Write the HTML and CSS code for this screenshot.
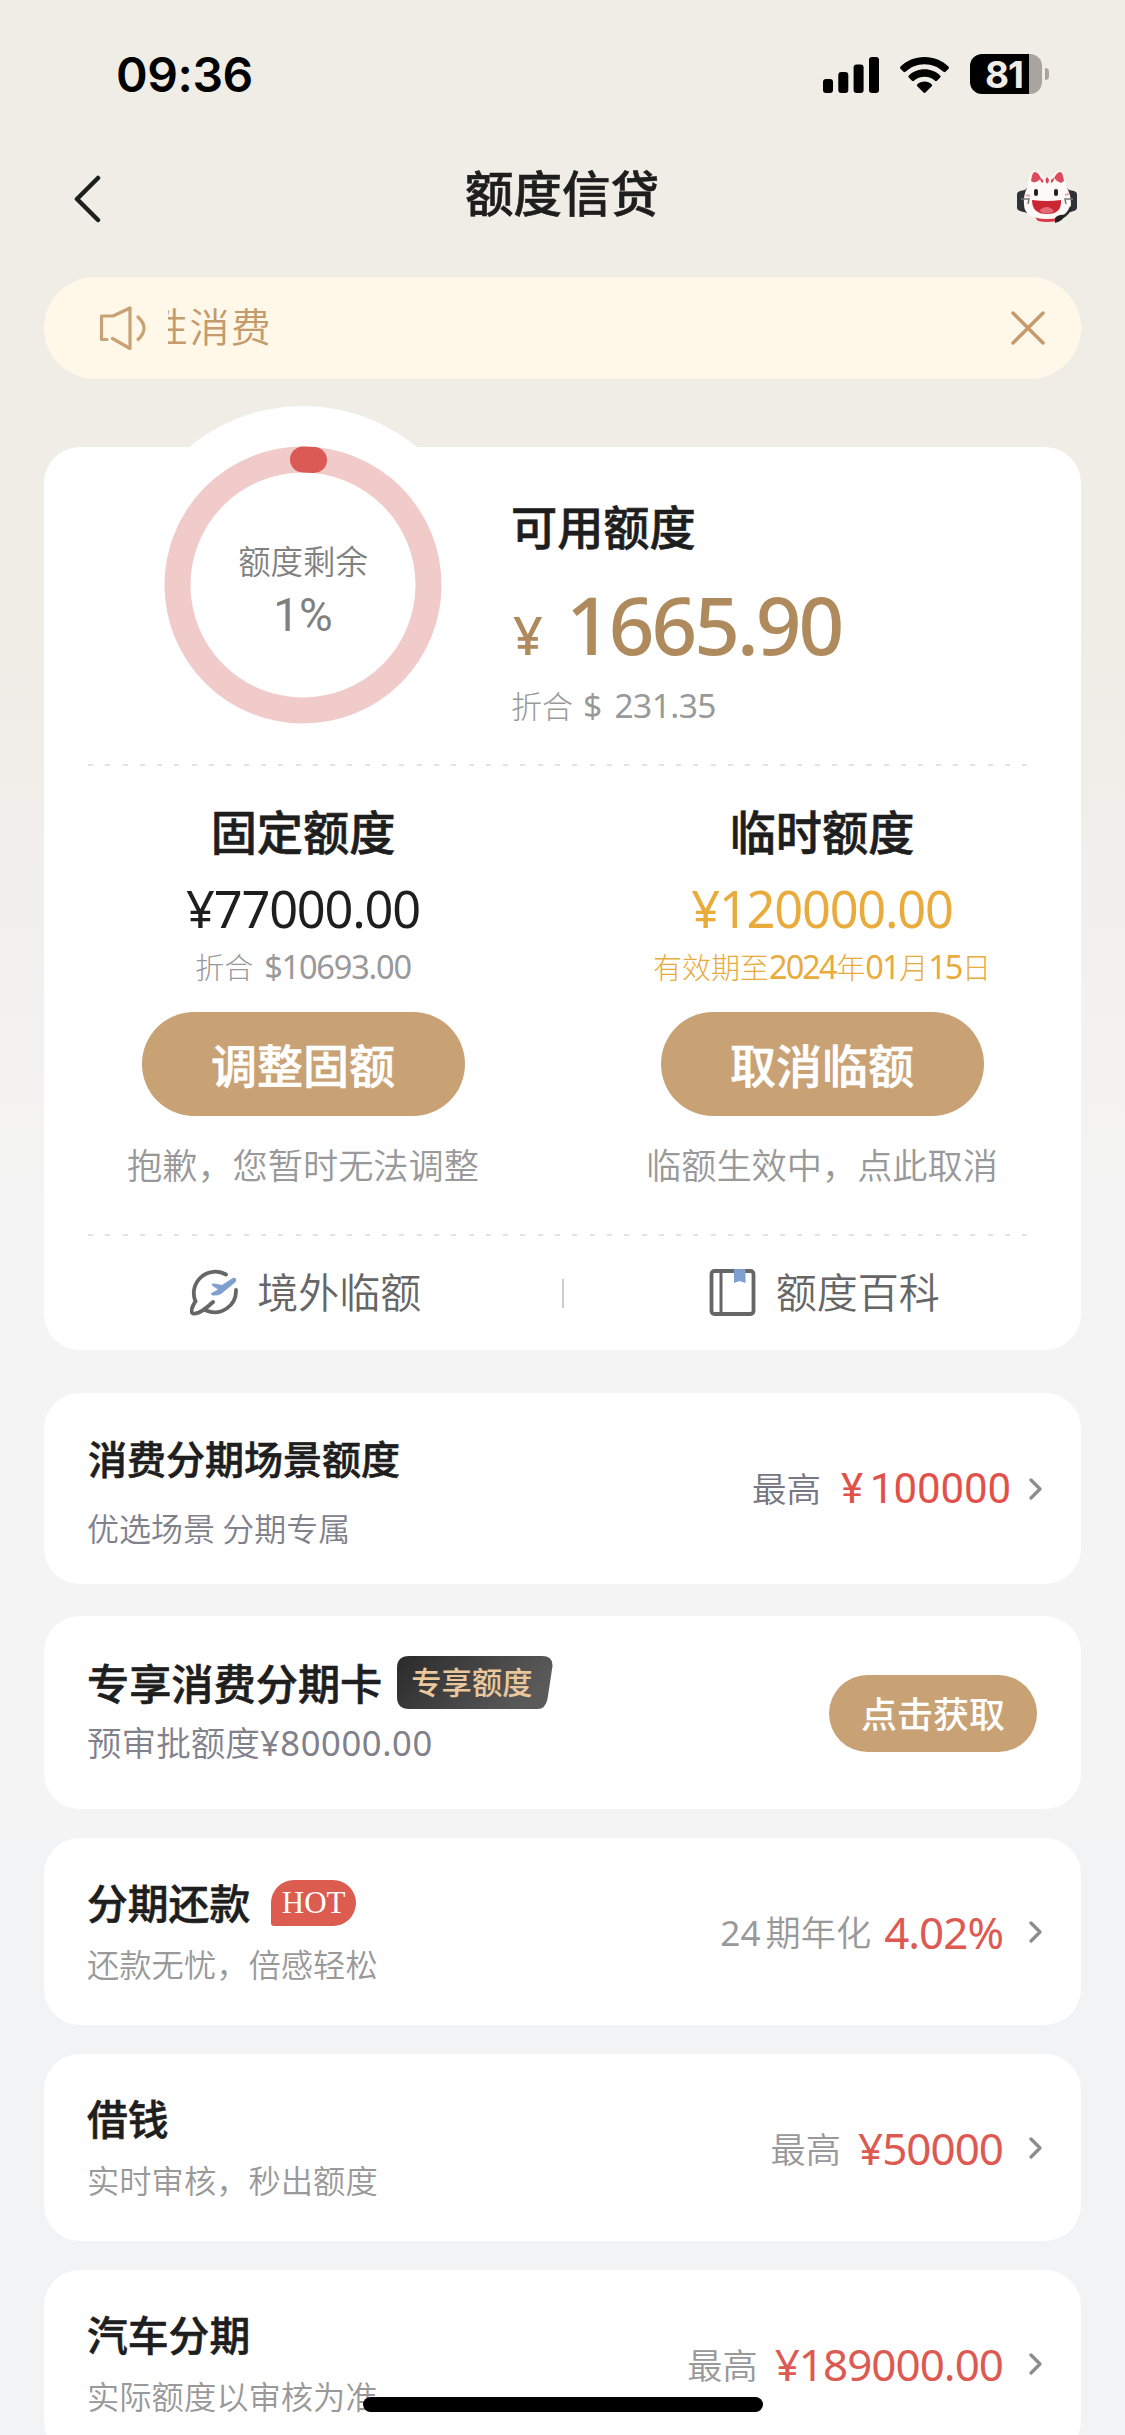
FILE: index.html
```html
<!DOCTYPE html>
<html lang="zh-CN">
<head>
<meta charset="utf-8">
<title>额度信贷</title>
<link rel="stylesheet" href="styles.css">
</head>
<body>
<div class="screen">
  <div class="status">
    <span class="clock">09:36</span>
    <svg class="signal" viewBox="0 0 56 36"><rect x="0" y="22" width="10" height="14" rx="3"/><rect x="15.3" y="15" width="10" height="21" rx="3"/><rect x="30.6" y="7.500" width="10" height="28.500" rx="3"/><rect x="46" y="0" width="10" height="36" rx="3"/></svg>
    <svg class="wifi" viewBox="0 0 49 36"><path d="M24.500 0C34 0 42.500 3.600 48.400 9.600c.7.700.7 1.500.1 2.100l-3 3.100c-.6.600-1.400.6-2 0C38.500 10 31.900 7.200 24.500 7.200S10.500 10 5.500 14.800c-.6.600-1.400.6-2 0l-3-3.100c-.6-.6-.6-1.400.1-2.100C6.500 3.600 15 0 24.500 0z"/><path d="M24.500 12.300c6.200 0 11.600 2.300 15.600 6.100.7.600.7 1.400.1 2.100l-3.200 3.200c-.6.600-1.400.6-2 .1-2.800-2.500-6.400-4-10.500-4s-7.700 1.500-10.500 4c-.6.500-1.400.5-2-.1l-3.200-3.200c-.6-.7-.6-1.500.1-2.100 4-3.800 9.400-6.100 15.600-6.100z"/><path d="M24.500 24.600c2.800 0 5.200 1 7.100 2.600.7.600.7 1.400.1 2l-6.200 6.300c-.6.600-1.400.6-2 0l-6.200-6.300c-.6-.6-.6-1.400.1-2 1.900-1.600 4.300-2.600 7.100-2.600z"/></svg>
    <div class="battery"><span class="level">81</span></div>
    <span class="nub"></span>
  </div>

  <header class="nav">
    <svg class="back" viewBox="0 0 28 48"><path d="M25 3 4 24l21 21"/></svg>
    <h1>额度信贷</h1>
    <svg class="mascot" viewBox="0 0 62 56">
      <path d="M11 19 5 25v17l6 2z" fill="#26282b"/><path d="M1 25q0-2 3-3l5-1v22l-5-1q-3-1-3-3z" fill="#303236"/>
      <path d="M51 19l6 6v17l-6 2z" fill="#26282b"/><path d="M61 25q0-2-3-3l-5-1v22l5-1q3-1 3-3z" fill="#303236"/>
      <path d="M18 47h27l-4 5q-10 2-19 0z" fill="#d83a48"/>
      <path d="M12 17Q13 2 19 2q5 0 8 6h9q3-6 8-6 6 0 6 15 5 8 5 18-1 15-24 15T8 35q-1-9 4-18z" fill="#fcf9f7"/>
      <path d="M15 12q1-9 4-9t6 6q-2 3-7 4.500zM38 9q3-6 6-6t4 9l-3 2q-5-2-7-5z" fill="#de4c5c"/>
      <path d="M31 8q4 3 0 7-3-4 0-7zM24 9q4 1 3 5-3-1-3-5zM38 9q-4 1-3 5 3-1 3-5z" fill="#dc4657"/>
      <rect x="18" y="20" width="4" height="7" rx="2" fill="#222"/><rect x="38" y="20" width="4" height="7" rx="2" fill="#222"/>
      <path d="M16 31q15 2 29 0 1 14-14 14T16 31z" fill="#cb2732"/><path d="M23 42q8-8 15 0-7 5-15 0z" fill="#e26b75"/>
      <path d="M10 26l4 1M49 26l4-1" stroke="#f0a6ad" stroke-width="2"/><path d="M5 30h8l-1 5M57 30h-8l1 5" fill="none" stroke="#777" stroke-width="1.500"/>
      <path d="M55 38q-3 8-9 10" fill="none" stroke="#26282b" stroke-width="2.500"/><path d="M39 49q4-4 10-3-2 6-10 8z" fill="#222"/>
    </svg>
  </header>

  <div class="notice">
    <svg class="speaker" viewBox="0 0 48 46"><path d="M9 34.500H3.500V11H15L32 3v40.500L14.500 33.500M40 12q12 11 0 22.500"/></svg>
    <div class="marquee"><span>性消费</span></div>
    <svg class="close" viewBox="0 0 34 34"><path d="M2 2l30 30M32 2 2 32"/></svg>
  </div>

  <section class="card summary">
    <div class="hero">
      <div class="ring">
        <svg viewBox="0 0 358 358"><circle cx="179" cy="179" r="179" fill="#fff"/><circle cx="179" cy="179" r="125.500" fill="none" stroke="#f1caca" stroke-width="26"/><path d="M179 53.500A125.500 125.500 0 0 1 190 54" fill="none" stroke="#db5a55" stroke-width="26" stroke-linecap="round"/></svg>
        <div class="ring-text"><span class="ring-label">额度剩余</span><span class="ring-value">1%</span></div>
      </div>
      <div class="available">
        <h2>可用额度</h2>
        <div class="amount"><span class="yen">¥</span><span class="num">1665.90</span></div>
        <div class="convert"><span>折合</span><span class="num dollar">$</span><span class="num">231.35</span></div>
      </div>
    </div>
    <div class="dash"></div>
    <div class="limits">
      <div class="limit">
        <h2>固定额度</h2>
        <div class="num value">¥77000.00</div>
        <div class="note"><span>折合</span><span class="num usd">$10693.00</span></div>
        <div class="btn">调整固额</div>
        <p>抱歉，您暂时无法调整</p>
      </div>
      <div class="limit">
        <h2>临时额度</h2>
        <div class="num value gold">¥120000.00</div>
        <div class="note gold"><span>有效期至</span><span class="num">2024</span><span>年</span><span class="num">01</span><span>月</span><span class="num">15</span><span>日</span></div>
        <div class="btn">取消临额</div>
        <p>临额生效中，点此取消</p>
      </div>
    </div>
    <div class="dash"></div>
    <div class="links">
      <div class="link">
        <svg viewBox="0 0 48 50" fill="none"><path d="M36 6.500A21.500 21.500 0 0 0 5.500 33.500M46 22A21.500 21.500 0 0 1 16 42.500M5.500 33C2 39 0 44 3 45.500c4 1 12-4 20-11.500" stroke="#666" stroke-width="3.800" stroke-linecap="round"/><path d="M22 17.500q-1-2.500 2-2l8 1.500 10-6.500q3-1.500 4 .5t-1.500 4L31 26q-4 2-8 1.500-3-1-1.500-2.500l6.500-3.500z" fill="#7f9fcf"/></svg>
        <span>境外临额</span>
      </div>
      <i class="sep"></i>
      <div class="link">
        <svg viewBox="0 0 48 50" fill="none"><rect x="2.500" y="3" width="42" height="43" rx="3" stroke="#666" stroke-width="3.800"/><path d="M12 3v43" stroke="#666" stroke-width="3"/><path d="M25 1h11.500v14l-6-2-5.500 2z" fill="#7f9fcf"/></svg>
        <span>额度百科</span>
      </div>
    </div>
  </section>

  <section class="card row scene">
    <div class="info"><h3>消费分期场景额度</h3><p>优选场景 分期专属</p></div>
    <div class="side"><span class="label">最高</span><span class="din">¥<b>100000</b></span><svg class="chev" viewBox="0 0 14 22"><path d="M2 2l9 9-9 9"/></svg></div>
  </section>

  <section class="card row exclusive">
    <div class="info">
      <h3>专享消费分期卡<span class="tag"><svg viewBox="0 0 156 53"><defs><linearGradient id="tag" x1="0" y1="0" x2="1" y2=".3"><stop offset="0" stop-color="#2a2a2a"/><stop offset="1" stop-color="#5a5a5a"/></linearGradient></defs><path d="M12 0h133q11 0 10.500 10l-5 33q-2 10-10 10H12Q0 53 0 41V12Q0 0 12 0z" fill="url(#tag)"/></svg><em>专享额度</em></span></h3>
      <p>预审批额度<span>¥80000.00</span></p>
    </div>
    <div class="btn small">点击获取</div>
  </section>

  <section class="card row item">
    <div class="info"><h3>分期还款<span class="hot">HOT</span></h3><p>还款无忧，倍感轻松</p></div>
    <div class="side"><span class="label"><span class="num">24</span>期年化</span><span class="num red rate">4.02%</span><svg class="chev" viewBox="0 0 14 22"><path d="M2 2l9 9-9 9"/></svg></div>
  </section>
  <section class="card row item">
    <div class="info"><h3>借钱</h3><p>实时审核，秒出额度</p></div>
    <div class="side"><span class="label">最高</span><span class="num red">¥50000</span><svg class="chev" viewBox="0 0 14 22"><path d="M2 2l9 9-9 9"/></svg></div>
  </section>
  <section class="card row item">
    <div class="info"><h3>汽车分期</h3><p>实际额度以审核为准</p></div>
    <div class="side"><span class="label">最高</span><span class="num red">¥189000.00</span><svg class="chev" viewBox="0 0 14 22"><path d="M2 2l9 9-9 9"/></svg></div>
  </section>
  <div class="home"></div>
</div>
</body>
</html>
```
FILE: styles.css
```css
* { box-sizing: border-box; margin: 0; padding: 0; }
body { background: #f2f3f5; }
svg { display: block; flex: none; }
h1, h2, h3 { font-weight: 500; -webkit-text-stroke: 0.6px currentColor; }
.screen {
  position: relative; width: 1125px; height: 2435px; overflow: hidden; padding: 0 44px;
  font-family: "Noto Sans CJK SC", sans-serif; color: #1e1e1e; white-space: nowrap;
  background: linear-gradient(#f0ece6 0, #f0ece6 620px, #f4f4f4 1200px, #f4f4f4 1837px, #f2f3f5 1838px);
}
.num { font-family: "Noto Sans", "Noto Sans CJK SC", sans-serif; font-weight: 400; }

.status { height: 150px; display: flex; align-items: flex-start; padding: 54px 0 0 72px; }
.clock { font: 600 48px/42px Inter, sans-serif; width: 707px; letter-spacing: -0.4px; color: #000; }
.signal { width: 56px; height: 36px; margin-top: 3px; }
.wifi { width: 49px; height: 36px; margin: 3px 0 0 21px; }
.battery { width: 72px; height: 40px; margin-left: 21px; border-radius: 12px; background: linear-gradient(90deg, #000 59px, #a9a49f 59px); }
.level { display: block; padding-left: 15px; font: 700 37px/41px Inter, sans-serif; letter-spacing: -1px; color: #f0ece6; }
.nub { width: 4px; height: 12px; margin: 14px 0 0 3px; border-radius: 0 5px 5px 0; background: #a9a49f; }

.nav { height: 127px; display: flex; align-items: flex-start; justify-content: space-between; padding: 0 3px 0 29px; }
.back { width: 28px; height: 48px; margin: 25px 7px 0 0; fill: none; stroke: #1e1e1e; stroke-width: 4.5; stroke-linecap: round; stroke-linejoin: round; }
.nav h1 { font-size: 48.5px; line-height: 82px; }
.mascot { width: 62px; height: 56px; margin-top: 19px; }

.notice { height: 102px; border-radius: 51px; background: #fff7e8; display: flex; align-items: center; padding: 0 36px 0 54px; color: #c39b6c; }
.speaker { width: 48px; height: 46px; fill: none; stroke: #c8a275; stroke-width: 3.2; stroke-linecap: round; stroke-linejoin: round; }
.marquee { width: 104px; height: 58px; margin-left: 22px; overflow: hidden; display: flex; justify-content: flex-end; font-size: 40px; line-height: 53px; letter-spacing: 1.3px; font-weight: 350; }
.close { width: 34px; height: 34px; margin-left: auto; fill: none; stroke: #c39b6c; stroke-width: 3.5; stroke-linecap: round; }

.card { background: #fff; border-radius: 36px; }
.summary { margin-top: 68px; height: 903px; }
.hero { height: 317px; display: flex; }
.ring { display: grid; width: 358px; height: 358px; margin: -41px 0 0 80px; }
.ring > * { grid-area: 1 / 1; }
.ring-text { padding-top: 132px; display: flex; flex-direction: column; align-items: center; color: #808080; }
.ring-label { font-size: 32.4px; line-height: 44px; font-weight: 350; }
.ring-value { font: 400 46px/58px Roboto, sans-serif; margin-top: 4px; }
.available { padding: 48px 0 0 29px; }
h2 { font-size: 46.2px; line-height: 60px; }
.amount { display: flex; align-items: baseline; color: #ae8a5c; height: 95px; line-height: 98px; margin-top: 20px; }
.yen { font-family: "Noto Sans", sans-serif; font-size: 52px; font-weight: 500; width: 55px; padding-left: 2px; }
.amount .num { font-size: 80px; letter-spacing: -3px; font-weight: 500; }
.convert { display: flex; align-items: baseline; font-size: 31px; font-weight: 300; line-height: 40px; color: #999; margin-top: 15px; }
.convert .num { font-size: 33.5px; letter-spacing: -0.6px; }
.convert .dollar { margin: 0 13px 0 10px; }
.dash { height: 2px; margin: 0 54px 0 44px; background: repeating-linear-gradient(90deg, #e3e3e3 0 5px, transparent 5px 17.3px); }

.limits { height: 468px; display: flex; }
.limit { flex: 1; display: flex; flex-direction: column; align-items: center; padding: 34px 1px 0 0; }
.limit + .limit { padding-right: 0; }
.value { font-size: 50.5px; line-height: 60px; margin-top: 19px; letter-spacing: -1.2px; }
.gold { color: #e8ab3c; }
.note { display: flex; align-items: baseline; font-size: 29px; font-weight: 300; line-height: 40px; margin-top: 7px; height: 40px; }
.note:not(.gold) { color: #999; }
.note .num { font-size: 32.5px; letter-spacing: -1.2px; }
.note.gold .num { letter-spacing: -1.9px; padding-right: 0.5px; }
.usd { margin-left: 11px; }
.btn { width: 323px; height: 104px; border-radius: 52px; background: #c8a275; color: #fff; font-size: 46px; font-weight: 500; line-height: 102px; text-align: center; margin-top: 26px; -webkit-text-stroke: 0.6px #fff; }
.limit p { font-size: 35.2px; font-weight: 350; line-height: 50px; margin-top: 23px; color: #999; }
.links { height: 114px; display: flex; align-items: center; }
.link { flex: 1; display: flex; align-items: center; justify-content: center; gap: 19px; padding-left: 5px; font-size: 41px; line-height: 60px; font-weight: 350; color: #666; }
.link svg { width: 48px; height: 50px; }
.link span { margin-top: -7px; }
.sep { width: 2px; height: 29px; background: #ccc; margin: 0 -1px; }

.row { display: flex; justify-content: space-between; padding: 0 38px 0 43px; }
.scene { margin-top: 43px; height: 191px; }
.scene h3 { font-size: 39px; line-height: 50px; margin: 39px 0 0 1px; }
.scene p { font-size: 32px; line-height: 40px; margin-top: 25px; color: #81818c; font-weight: 350; }
.side { display: flex; align-items: center; height: 100%; }
.label { font-size: 35.2px; line-height: 50px; font-weight: 350; color: #999; }
.scene .label { font-size: 34.5px; color: #777683; margin-top: -3px; }
.din { font: 400 42px/50px Roboto, sans-serif; color: #e2504a; margin: 0 18px 0 20px; display: flex; gap: 7px; letter-spacing: -0.1px; }
.din b { font-weight: 400; }
.chev { width: 14px; height: 22px; fill: none; stroke: #8c8c8c; stroke-width: 3.2; stroke-linecap: round; stroke-linejoin: round; }
.exclusive { margin-top: 32px; height: 193px; }
.exclusive h3 { display: flex; align-items: center; font-size: 42.2px; line-height: 52px; height: 54px; margin-top: 39px; }
.tag { display: grid; width: 156px; height: 53px; margin-left: 15px; }
.tag > * { grid-area: 1 / 1; }
.tag em { font-style: normal; font-size: 30.3px; line-height: 50px; padding-left: 14px; color: #eac79c; font-weight: 500; -webkit-text-stroke: 0; }
.exclusive p { font-size: 34.6px; line-height: 50px; margin-top: 7px; color: #81818c; font-weight: 350; }
.exclusive p span { font-family: "Noto Sans", sans-serif; font-weight: 400; letter-spacing: 0.6px; }
.small { width: 208px; height: 77px; line-height: 74px; font-size: 36px; margin: 59px 6px 0 0; -webkit-text-stroke: 0; }
.item { margin-top: 29px; height: 187px; }
.item h3 { display: flex; align-items: center; height: 50px; font-size: 40.8px; line-height: 50px; margin-top: 39px; }
.item p { font-size: 32.3px; line-height: 40px; margin-top: 16px; color: #999; font-weight: 350; }
.hot { width: 85px; height: 46px; margin: 2px 0 0 21px; border-radius: 23px 23px 23px 3px; background: #dc5c50; color: #fff; font: 400 31px/46px "Liberation Serif", serif; text-align: center; -webkit-text-stroke: 0; }
.item .label .num { letter-spacing: 0; margin-right: 5px; }
.red { color: #dc5a52; font-size: 44px; letter-spacing: -1px; line-height: 50px; margin: 0 26px 0 17px; }
.rate { margin-left: 13px; }
.home { position: absolute; left: 363px; top: 2397px; width: 400px; height: 15px; border-radius: 8px; background: #000; }
```
